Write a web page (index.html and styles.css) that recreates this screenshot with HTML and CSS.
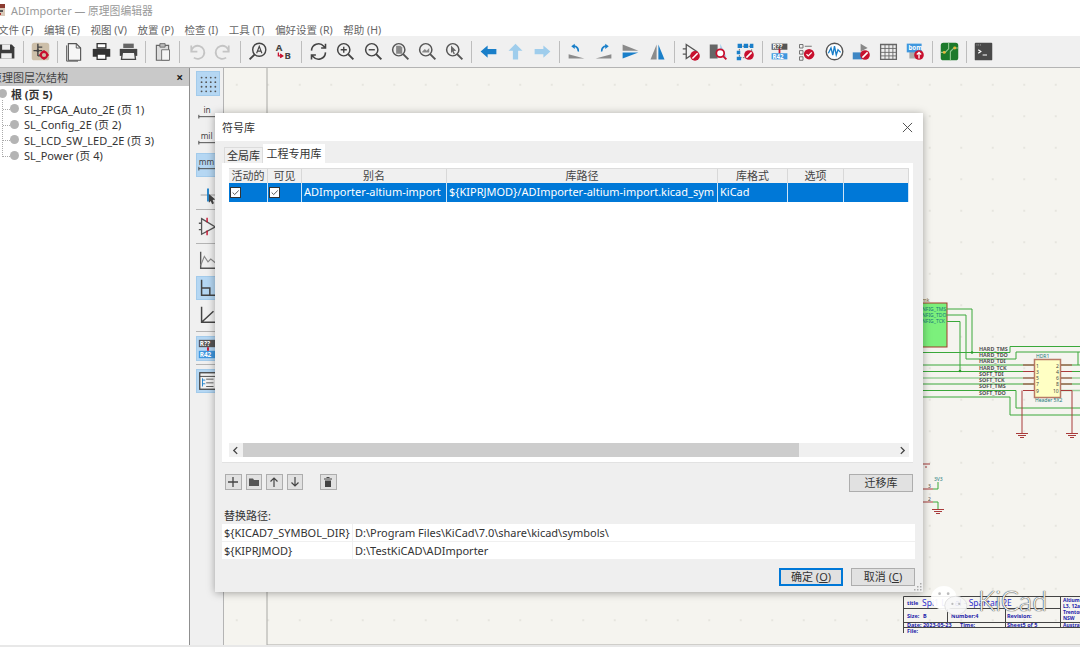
FILE: index.html
```html
<!DOCTYPE html>
<html lang="zh-CN">
<head>
  <meta charset="UTF-8">
  <title>ADImporter — 原理图编辑器</title>
  <link rel="stylesheet" href="styles.css">
</head>
<body>
  <header class="title-bar">
    <svg class="app-icon" viewBox="0 0 12 14"><rect y="1" width="9" height="12" fill="#d9c9b8"/><rect y="1" width="9" height="4" fill="#8c3b30"/><rect x="2" y="7" width="5" height="2" fill="#555"/><rect x="2" y="10" width="3" height="2" fill="#a33"/></svg>
    <span>ADImporter — 原理图编辑器</span>
  </header>

  <nav class="menu-bar">
    <a>文件 (F)</a><a>编辑 (E)</a><a>视图 (V)</a><a>放置 (P)</a><a>检查 (I)</a><a>工具 (T)</a><a>偏好设置 (R)</a><a>帮助 (H)</a>
  </nav>

  <div class="toolbar">
    <span class="tool"><svg viewBox="0 0 24 24"><path d="M3 4h15l3 3v13H3z" fill="#3c3c3c"/><rect x="7" y="4" width="9" height="6" fill="#eee"/><rect x="6" y="14" width="12" height="6" fill="#eee"/></svg></span>
    <i class="sep"></i>
    <span class="tool"><svg viewBox="0 0 24 24"><rect x="2" y="2" width="20" height="20" rx="3" fill="#cdbfa9"/><path d="M9 3v14M4 11h10M9 7h5M9 17h3" stroke="#444" stroke-width="1.6" fill="none"/><circle cx="9" cy="11" r="1.6" fill="#444"/><circle cx="16" cy="16" r="3.6" fill="none" stroke="#c8102e" stroke-width="2.4"/><path d="M16 10.500v2M16 19.500v2M10.500 16h2M19.500 16h2" stroke="#c8102e" stroke-width="1.8"/></svg></span>
    <i class="sep"></i>
    <span class="tool"><svg viewBox="0 0 24 24"><path d="M5 3h9l5 5v14H5z" fill="#f6f6f6" stroke="#555" stroke-width="1.300"/><path d="M14 3v5h5M3 5v18h13" fill="none" stroke="#555" stroke-width="1.100"/></svg></span>
    <span class="tool"><svg viewBox="0 0 24 24"><path d="M7 3h10v5H7z" fill="#fff" stroke="#333" stroke-width="1.500"/><path d="M2 9h20v9H2z" fill="#333"/><path d="M7 15h10v6H7z" fill="#fff" stroke="#333" stroke-width="1.500"/></svg></span>
    <span class="tool"><svg viewBox="0 0 24 24"><path d="M6 3h12v5H6z" fill="#666"/><path d="M2 9h20v8H2z" fill="#444"/><path d="M5 13h14l1 8H4z" fill="#f0f0f0" stroke="#444" stroke-width="1.500"/></svg></span>
    <i class="sep"></i>
    <span class="tool"><svg viewBox="0 0 24 24"><path d="M5 5h14v17H5z" fill="#ddd" stroke="#666" stroke-width="1.300"/><path d="M9 3h6v4H9z" fill="#bbb" stroke="#666"/><path d="M11 10h9v12h-9z" fill="#f4f4f4" stroke="#666"/></svg></span>
    <i class="sep"></i>
    <span class="tool dim"><svg viewBox="0 0 24 24"><path d="M6 12a7.500 7.500 0 1 1 3 7M6 5v7h7" fill="none" stroke="#c4c4c4" stroke-width="2"/></svg></span>
    <span class="tool dim"><svg viewBox="0 0 24 24"><path d="M18 12a7.500 7.500 0 1 0-3 7M18 5v7h-7" fill="none" stroke="#c4c4c4" stroke-width="2"/></svg></span>
    <i class="sep"></i>
    <span class="tool"><svg viewBox="0 0 24 24"><circle cx="14" cy="10" r="7.500" fill="none" stroke="#444" stroke-width="1.600"/><path d="M8.500 15.500L3 21" stroke="#444" stroke-width="2.200"/><path d="M11 14l3-8 3 8M12.200 11.500h3.600" fill="none" stroke="#444" stroke-width="1.300"/></svg></span>
    <span class="tool"><svg viewBox="0 0 24 24"><text x="2" y="11" class="ico-text">A</text><text x="12" y="21" class="ico-text">B</text><path d="M5 13v4h4M7 15l3 2-3 2" fill="none" stroke="#c8102e" stroke-width="1.500"/></svg></span>
    <i class="sep"></i>
    <span class="tool"><svg viewBox="0 0 24 24"><path d="M4 11a8 8 0 0 1 14-5l2 2M20 13a8 8 0 0 1-14 5l-2-2M20 3v5h-5M4 21v-5h5" fill="none" stroke="#444" stroke-width="1.800"/></svg></span>
    <span class="tool"><svg viewBox="0 0 24 24"><circle cx="10" cy="10" r="7" fill="none" stroke="#444" stroke-width="1.700"/><path d="M15 15l6 6" stroke="#444" stroke-width="2.200"/><path d="M6.500 10h7M10 6.500v7" stroke="#444" stroke-width="1.600"/></svg></span>
    <span class="tool"><svg viewBox="0 0 24 24"><circle cx="10" cy="10" r="7" fill="none" stroke="#444" stroke-width="1.700"/><path d="M15 15l6 6" stroke="#444" stroke-width="2.200"/><path d="M6.500 10h7" stroke="#444" stroke-width="1.600"/></svg></span>
    <span class="tool"><svg viewBox="0 0 24 24"><circle cx="10" cy="10" r="7" fill="none" stroke="#555" stroke-width="1.700"/><path d="M15 15l6 6" stroke="#555" stroke-width="2.200"/><path d="M7 5.500h5l2 2v7H7z" fill="#888"/></svg></span>
    <span class="tool"><svg viewBox="0 0 24 24"><circle cx="10" cy="10" r="7" fill="none" stroke="#555" stroke-width="1.700"/><path d="M15 15l6 6" stroke="#555" stroke-width="2.200"/><path d="M6 12l3-3 2 2 3-3v5H6z" fill="#888"/></svg></span>
    <span class="tool"><svg viewBox="0 0 24 24"><circle cx="10" cy="10" r="7" fill="none" stroke="#555" stroke-width="1.700"/><path d="M15 15l6 6" stroke="#555" stroke-width="2.200"/><path d="M8 5l6 6-3 .5 1.500 3-1.500.5-1.500-3-1.500 2z" fill="#666"/></svg></span>
    <i class="sep"></i>
    <span class="tool"><svg viewBox="0 0 24 24"><path d="M3 12l8-7v4h10v6H11v4z" fill="#1a7fc9"/></svg></span>
    <span class="tool"><svg viewBox="0 0 24 24"><path d="M12 3l8 8h-5v10H9V11H4z" fill="#9fcdec"/></svg></span>
    <span class="tool"><svg viewBox="0 0 24 24"><path d="M21 12l-8-7v4H3v6h10v4z" fill="#9fcdec"/></svg></span>
    <i class="sep"></i>
    <span class="tool"><svg viewBox="0 0 24 24"><path d="M3 20v-5l18 5z" fill="#8b8b8b"/><path d="M14 12a5 5 0 0 0-5-6" fill="none" stroke="#1a7fc9" stroke-width="2"/><path d="M6 6l4-3v6z" fill="#1a7fc9"/></svg></span>
    <span class="tool"><svg viewBox="0 0 24 24"><path d="M21 20v-5L3 20z" fill="#8b8b8b"/><path d="M10 12a5 5 0 0 1 5-6" fill="none" stroke="#1a7fc9" stroke-width="2"/><path d="M18 6l-4-3v6z" fill="#1a7fc9"/></svg></span>
    <span class="tool"><svg viewBox="0 0 24 24"><path d="M3 4l18 7H3z" fill="#8b8b8b"/><path d="M3 20l18-7H3z" fill="#1a7fc9"/></svg></span>
    <span class="tool"><svg viewBox="0 0 24 24"><path d="M11 4L4 21h7z" fill="#8b8b8b"/><path d="M13 4l7 17h-7z" fill="#1a7fc9"/></svg></span>
    <i class="sep"></i>
    <span class="tool"><svg viewBox="0 0 24 24"><path d="M6 4l12 8-12 8zM2 9h4M2 15h4" fill="none" stroke="#555" stroke-width="1.500"/><circle cx="16" cy="17" r="5.500" fill="#c8102e"/><path d="M13 20l6-6" stroke="#fff" stroke-width="1.800"/></svg></span>
    <span class="tool"><svg viewBox="0 0 24 24"><path d="M2 4h9v16H2z" fill="#666"/><path d="M14 3l7 15h-7z" fill="#9fcdec"/><circle cx="14" cy="14" r="4.500" fill="#fff" stroke="#c8102e" stroke-width="2"/><path d="M17 17l4 4" stroke="#c8102e" stroke-width="2.200"/></svg></span>
    <span class="tool"><svg viewBox="0 0 24 24"><path d="M5 6h14v13H5z" fill="none" stroke="#666" stroke-dasharray="2 1.500"/><path d="M3 3h5v5H3zM10 3h5v5h-5zM17 3h4v5h-4zM2 11h4v4H2zM2 18h5v4H2z" fill="#1a7fc9"/><circle cx="16" cy="16" r="5.500" fill="#c8102e"/><path d="M13 19l6-6" stroke="#fff" stroke-width="1.800"/></svg></span>
    <i class="sep"></i>
    <span class="tool"><svg viewBox="0 0 24 24"><rect x="3" y="3" width="18" height="7" fill="#555"/><rect x="3" y="14" width="18" height="7" fill="#3f97de"/><text x="4" y="9.300" class="ico-mini">R??</text><text x="4" y="20.300" class="ico-mini">R42</text><path d="M12 9v5" stroke="#c8102e" stroke-width="2"/></svg></span>
    <span class="tool"><svg viewBox="0 0 24 24"><path d="M4 4h4v4H4zM4 11h4v4H4zM4 18h4v4H4z" fill="none" stroke="#666"/><path d="M10 6h8" stroke="#666"/><circle cx="15" cy="15" r="6" fill="#c8102e"/><path d="M12 15l2 2 4-4" fill="none" stroke="#fff" stroke-width="1.600"/></svg></span>
    <span class="tool"><svg viewBox="0 0 24 24"><circle cx="12" cy="12" r="9.500" fill="#fff" stroke="#555" stroke-width="1.600"/><path d="M5 14l3-6 2 8 2-10 2 10 2-6 3 3" fill="none" stroke="#1a7fc9" stroke-width="1.500"/></svg></span>
    <span class="tool"><svg viewBox="0 0 24 24"><path d="M11 3l8 5-8 4z" fill="#888"/><rect x="2" y="13" width="11" height="8" fill="#3f87c4"/><circle cx="16" cy="16" r="5.500" fill="#c8102e"/><path d="M13 19l6-6" stroke="#fff" stroke-width="1.800"/></svg></span>
    <span class="tool"><svg viewBox="0 0 24 24"><path d="M3 4h18v17H3z" fill="#eee" stroke="#666" stroke-width="1.500"/><path d="M3 8.500h18M3 13h18M3 17h18M8 4v17M12.500 4v17M17 4v17" stroke="#666"/></svg></span>
    <span class="tool"><svg viewBox="0 0 24 24"><rect x="5" y="10" width="14" height="10" fill="#aaa"/><rect x="2" y="3" width="17" height="10" fill="#3f97de"/><text x="4" y="10.500" class="ico-mini">bom</text><circle cx="16" cy="16" r="5.500" fill="#c8102e"/><path d="M16 20v-7M13.500 15.500l2.500-2.500 2.500 2.500" fill="none" stroke="#fff" stroke-width="1.500"/></svg></span>
    <i class="sep"></i>
    <span class="tool"><svg viewBox="0 0 24 24"><rect x="2" y="2" width="20" height="20" rx="3" fill="#1d7a2b"/><path d="M2 13h5l4-4V2M22 8h-5l-4 4v10" fill="none" stroke="#8fc78f" stroke-width="1.300"/><circle cx="6" cy="13" r="1.700" fill="#e8b93c"/><circle cx="18" cy="8" r="1.700" fill="#e8b93c"/></svg></span>
    <i class="sep"></i>
    <span class="tool"><svg viewBox="0 0 24 24"><rect x="2" y="2" width="20" height="20" rx="1" fill="#4a4a4a"/><path d="M6 10l3 2-3 2M11 16h5" fill="none" stroke="#fff" stroke-width="1.300"/><path d="M4 4.500h6" stroke="#bbb" stroke-dasharray="1 1"/></svg></span>
  </div>

  <div class="workspace">
    <aside class="hierarchy">
      <div class="panel-head"><span>原理图层次结构</span><b>×</b></div>
      <ul class="tree">
        <li class="root"><i class="dot"></i>根 (页 5)</li>
        <li><i class="dot"></i>SL_FPGA_Auto_2E (页 1)</li>
        <li><i class="dot"></i>SL_Config_2E (页 2)</li>
        <li><i class="dot"></i>SL_LCD_SW_LED_2E (页 3)</li>
        <li><i class="dot"></i>SL_Power (页 4)</li>
      </ul>
    </aside>

    <div class="side-tools">
      <span class="vtool on m5"><svg viewBox="0 0 24 24" fill="#555"><circle cx="5" cy="5" r="1"/><circle cx="10" cy="5" r="1"/><circle cx="15" cy="5" r="1"/><circle cx="20" cy="5" r="1"/><circle cx="5" cy="10" r="1"/><circle cx="10" cy="10" r="1"/><circle cx="15" cy="10" r="1"/><circle cx="20" cy="10" r="1"/><circle cx="5" cy="15" r="1"/><circle cx="10" cy="15" r="1"/><circle cx="15" cy="15" r="1"/><circle cx="20" cy="15" r="1"/><circle cx="5" cy="20" r="1"/><circle cx="10" cy="20" r="1"/><circle cx="15" cy="20" r="1"/><circle cx="20" cy="20" r="1"/></svg></span>
      <span class="vtool m2"><svg viewBox="0 0 24 24"><text x="7" y="12" class="unit">in</text><path d="M2 16h20M2 14v4M22 14v4" stroke="#444" fill="none"/></svg></span>
      <span class="vtool m2"><svg viewBox="0 0 24 24"><text x="4" y="12" class="unit">mil</text><path d="M2 16h20M2 14v4M22 14v4" stroke="#444" fill="none"/></svg></span>
      <span class="vtool on m6"><svg viewBox="0 0 24 24"><text x="2" y="12" class="unit">mm</text><path d="M2 16h20M2 14v4M22 14v4" stroke="#444" fill="none"/></svg></span>
      <span class="vtool m2"><svg viewBox="0 0 24 24"><path d="M4 12h16" stroke="#999"/><path d="M12 5v14" stroke="#1a7fc9" stroke-width="2"/><path d="M13 11l7 6-3 .5 1.500 3.500-2 1-1.500-3.500-2 2z" fill="#444"/></svg></span>
      <i class="vsep"></i>
      <span class="vtool m5"><svg viewBox="0 0 24 24"><path d="M5 4l15 9-15 8zM2 9h3M2 16h3" fill="none" stroke="#555" stroke-width="1.400"/><path d="M11 3v5M11 17v5" stroke="#c8102e" stroke-width="1.500"/></svg></span>
      <i class="vsep"></i>
      <span class="vtool m4"><svg viewBox="0 0 24 24"><path d="M4 3v18h18" fill="none" stroke="#555" stroke-width="1.500"/><path d="M4 18l4-10 4 6 3-3 5 4" fill="none" stroke="#888" stroke-width="1.200"/></svg></span>
      <span class="vtool on m3"><svg viewBox="0 0 24 24"><path d="M5 3v17h17M5 12h9v8" fill="none" stroke="#444" stroke-width="1.600"/></svg></span>
      <span class="vtool m4"><svg viewBox="0 0 24 24"><path d="M5 3v17h17M5 20L18 8" fill="none" stroke="#444" stroke-width="1.600"/></svg></span>
      <i class="vsep"></i>
      <span class="vtool on m3 tall"><svg viewBox="0 0 24 24"><rect x="2" y="2" width="20" height="8" fill="#555"/><rect x="2" y="14" width="20" height="8" fill="#3f97de"/><text x="3" y="9" class="ico-mini">R??</text><text x="3" y="21" class="ico-mini">R42</text><path d="M12 10v4" stroke="#c8102e" stroke-width="2"/></svg></span>
      <i class="vsep"></i>
      <span class="vtool on m3"><svg viewBox="0 0 24 24"><rect x="3" y="3" width="18" height="18" fill="#f2f2f2" stroke="#444" stroke-width="1.400"/><path d="M3 7h18" stroke="#444"/><path d="M6 9v9M6 11h3M6 15h3" stroke="#1a7fc9" fill="none"/><path d="M10 10h8M10 14h8M10 18h8" stroke="#555"/></svg></span>
    </div>

    <main class="canvas">
      <svg class="sheet" viewBox="224 68 856 577">
        <path d="M267 68V645H1080" class="frame"/>
        <rect x="922" y="303" width="25" height="44" class="sub"/>
        <text x="922" y="302" class="sub-name">mk</text>
        <text x="922" y="310.500" class="net-teal">NFIG_TMS</text>
        <text x="922" y="316.500" class="net-teal">NFIG_TDO</text>
        <text x="922" y="323" class="net-teal">NFIG_TCK</text>
        <path d="M947 309H972V352.500M947 315H966V359H1016V352H1080M947 321.500H960V371" class="wire"/>
        <path d="M923 352.500H1010V346.500H1080M923 365H1035M923 371.500H1035M923 384H1035M923 390.500H1016V408H1080M923 397H1010V415H1080M1060 365H1080M1060 371.500H1080M1060 384H1080M1078 352V365" class="wire"/>
        <path d="M923 378H1035M1060 378H1080M1060 390.500H1080" class="wire faint"/>
        <circle cx="972" cy="352.500" r="1.300" fill="#2c9c2c"/>
        <circle cx="960" cy="371" r="1.300" fill="#2c9c2c"/>
        <text x="979" y="351" class="net">HARD_TMS</text>
        <text x="979" y="357" class="net">HARD_TDO</text>
        <text x="979" y="363" class="net">HARD_TDI</text>
        <text x="979" y="369.500" class="net">HARD_TCK</text>
        <text x="979" y="376" class="net">SOFT_TDI</text>
        <text x="979" y="382" class="net">SOFT_TCK</text>
        <text x="979" y="388" class="net">SOFT_TMS</text>
        <text x="979" y="394.500" class="net">SOFT_TDO</text>
        <rect x="1034.500" y="359.500" width="26" height="38" class="header-box"/>
        <path d="M1023 365H1034M1023 371.500H1034M1023 378H1034M1023 384H1034M1023 390.500H1034M1061 365H1072M1061 371.500H1072M1061 378H1072M1061 384H1072M1061 390.500H1072M1022 390.500V428M1072 390.500V428" class="pin"/>
        <text x="1036" y="367.500" class="pin-no">1</text><text x="1036" y="373.500" class="pin-no">3</text><text x="1036" y="380" class="pin-no">5</text><text x="1036" y="386" class="pin-no">7</text><text x="1036" y="392.500" class="pin-no">9</text>
        <text x="1056" y="367.500" class="pin-no">2</text><text x="1056" y="373.500" class="pin-no">4</text><text x="1056" y="380" class="pin-no">6</text><text x="1056" y="386" class="pin-no">8</text><text x="1053" y="392.500" class="pin-no">10</text>
        <text x="1036" y="358" class="net-teal">HDR1</text>
        <text x="1035" y="401.500" class="net-teal">Header 5X2</text>
        <path d="M1016 433.500H1028M1018 435.500H1026M1020 437.500H1024M1066 433.500H1078M1068 435.500H1076M1070 437.500H1074M1022 428V433M1072 428V433" class="pin"/>
        <path d="M922.500 458V468M922.500 464H930M925 467H927M922.500 483V508M923 489H933M923 502H933" class="pin"/>
        <path d="M933 489H938V482M933 502H938V509" class="wire"/>
        <text x="934" y="481" class="net-teal">3V3</text>
        <text x="928" y="488" class="pin-no">3</text><text x="928" y="501" class="pin-no">2</text>
        <path d="M932 509.500H944M934 511.500H942M936 513.500H940" class="pin"/>

        <path d="M903.500 633V596.500H1080M903.500 608.500H1060M903.500 622.500H1080M903.500 627.500H1080M947.500 608.500V622.500M1005.500 608.500V627.500M1060.500 596.500V627.500" class="frame dark"/>
        <text x="907" y="605" class="tb-label">title</text>
        <text x="922" y="606" class="tb-title">Spi1 Level - Spartan 2E</text>
        <text x="907" y="618" class="tb-label">Size:</text><text x="923" y="618" class="tb-label">B</text>
        <text x="951" y="618" class="tb-label">Number:4</text>
        <text x="1007" y="618" class="tb-label">Revision:</text>
        <text x="907" y="626.500" class="tb-label">Date: 2023-05-23</text><text x="960" y="626.500" class="tb-label">Time:</text>
        <text x="1007" y="626.500" class="tb-label">Sheet5 of 5</text>
        <text x="907" y="632.500" class="tb-label">File:</text>
        <text x="1063" y="602" class="tb-small">Altium</text><text x="1063" y="608" class="tb-small">L3, 12a</text><text x="1063" y="614" class="tb-small">Trenton</text><text x="1063" y="620" class="tb-small">NSW</text><text x="1063" y="626.500" class="tb-small">Australia</text>
      </svg>
    </main>
  </div>

  <div class="watermark">
    <svg viewBox="0 0 44 34"><ellipse cx="16" cy="14" rx="15" ry="14" fill="#fff" fill-opacity=".92"/><ellipse cx="30" cy="23" rx="13" ry="11" fill="#f7f7f7" fill-opacity=".9" stroke="#ddd"/><circle cx="11" cy="9" r="1.600" fill="#bbb"/><circle cx="21" cy="9" r="1.600" fill="#bbb"/><circle cx="26" cy="21" r="1.300" fill="#bbb"/><circle cx="34" cy="21" r="1.300" fill="#bbb"/></svg>
    <span>KiCad</span>
  </div>

  <section class="dialog">
    <div class="dialog-title">
      <span>符号库</span>
      <svg class="close" viewBox="0 0 12 12"><path d="M1 1l10 10M11 1L1 11" stroke="#444" stroke-width="1"/></svg>
    </div>
    <div class="dialog-body">
      <div class="tabs">
        <span class="tab">全局库</span>
        <span class="tab active">工程专用库</span>
      </div>
      <div class="tab-panel">
        <div class="grid grid-head">
          <span>活动的</span><span>可见</span><span>别名</span><span>库路径</span><span>库格式</span><span>选项</span><span></span>
        </div>
        <div class="grid grid-row">
          <span class="check-cell"><i class="check"><svg viewBox="0 0 11 11"><path d="M2 5.500l2.500 2.500 5-5" fill="none" stroke="#444" stroke-width="1.100"/></svg></i></span>
          <span class="check-cell"><i class="check"><svg viewBox="0 0 11 11"><path d="M2 5.500l2.500 2.500 5-5" fill="none" stroke="#444" stroke-width="1.100"/></svg></i></span>
          <span>ADImporter-altium-import</span>
          <span>${KIPRJMOD}/ADImporter-altium-import.kicad_sym</span>
          <span>KiCad</span><span></span><span></span>
        </div>
        <div class="hscroll">
          <svg class="arrow" viewBox="0 0 8 8"><path d="M5.500 1L2.500 4l3 3" fill="none" stroke="#444" stroke-width="1.200"/></svg>
          <div class="thumb"></div>
          <svg class="arrow" viewBox="0 0 8 8"><path d="M2.500 1l3 3-3 3" fill="none" stroke="#444" stroke-width="1.200"/></svg>
        </div>
      </div>

      <div class="actions">
        <button class="icon-btn"><svg viewBox="0 0 12 12"><path d="M6 1v10M1 6h10" stroke="#444" stroke-width="1.300"/></svg></button>
        <button class="icon-btn"><svg viewBox="0 0 12 12"><path d="M1 2.500h4l1 1.500h5v6H1z" fill="#555"/></svg></button>
        <button class="icon-btn"><svg viewBox="0 0 12 12"><path d="M6 11V2M2.500 5.500L6 2l3.500 3.500" fill="none" stroke="#444" stroke-width="1.200"/></svg></button>
        <button class="icon-btn"><svg viewBox="0 0 12 12"><path d="M6 1v9M2.500 6.500L6 10l3.500-3.500" fill="none" stroke="#444" stroke-width="1.200"/></svg></button>
        <button class="icon-btn trash"><svg viewBox="0 0 12 12"><path d="M2 2.500h8v1H2zM4.500 1h3v1h-3zM3 4.500h6v6.500H3z" fill="#444"/></svg></button>
        <button class="text-btn migrate">迁移库</button>
      </div>

      <p class="paths-label">替换路径:</p>
      <div class="paths">
        <div class="path-row"><span>${KICAD7_SYMBOL_DIR}</span><span>D:\Program Files\KiCad\7.0\share\kicad\symbols\</span></div>
        <div class="path-row"><span>${KIPRJMOD}</span><span>D:\TestKiCAD\ADImporter</span></div>
      </div>

      <div class="dialog-foot">
        <button class="text-btn primary">确定 (<u>O</u>)</button>
        <button class="text-btn">取消 (<u>C</u>)</button>
      </div>
      <svg class="grip" viewBox="0 0 8 8" fill="#aaa"><rect x="6" y="0" width="1.500" height="1.500"/><rect x="3" y="3" width="1.500" height="1.500"/><rect x="6" y="3" width="1.500" height="1.500"/><rect x="0" y="6" width="1.500" height="1.500"/><rect x="3" y="6" width="1.500" height="1.500"/><rect x="6" y="6" width="1.500" height="1.500"/></svg>
    </div>
  </section>
</body>
</html>
```

FILE: styles.css
```css
* {
  margin: 0;
  padding: 0;
  box-sizing: border-box;
  font-family: 'Noto Sans', 'Noto Sans CJK SC', sans-serif;
}

html, body {
  height: 100%;
  overflow: hidden;
}

body {
  display: flex;
  flex-direction: column;
  width: 1080px;
  height: 647px;
  background-color: #fff;
  color: #333;
  font-size: 11px;
  position: relative;
}

.title-bar {
  height: 20px;
  display: flex;
  align-items: center;
  color: #999;
  font-size: 10.8px;
}

.app-icon {
  width: 12px;
  height: 14px;
  margin-left: -4px;
  margin-right: 3px;
}

.menu-bar {
  height: 16px;
  padding-top: 2px;
  display: flex;
  align-items: center;
  gap: 10.6px;
  margin-left: -2px;
  color: #666;
  font-size: 10.5px;
}

.toolbar {
  height: 32px;
  display: flex;
  align-items: center;
  margin-left: -7px;
  background-color: #f0f0f0;
  border-bottom: 1px solid #b4b4b4;
}

.tool {
  width: 27.1px;
  height: 24px;
  display: flex;
  align-items: center;
  justify-content: center;
  flex: none;
}

.tool svg {
  width: 21px;
  height: 21px;
}

.sep {
  width: 6.9px;
  flex: none;
  align-self: center;
  height: 22px;
  background: linear-gradient(#bdbdbd, #bdbdbd) center / 1px 100% no-repeat;
}

.ico-text {
  font-size: 11px;
  font-weight: 700;
  fill: #444;
}

.ico-mini {
  font-size: 7px;
  font-weight: 700;
  fill: #fff;
}

.unit {
  font-size: 9px;
  fill: #444;
}

.workspace {
  flex: 1;
  display: flex;
  min-height: 0;
  border-bottom: 2px solid #e8e8e8;
}

.hierarchy {
  width: 190px;
  flex: none;
  border-right: 1px solid #8f8f8f;
  background-color: #fff;
}

.panel-head {
  height: 18px;
  display: flex;
  justify-content: space-between;
  align-items: center;
  padding: 0 6px 0 0;
  margin-left: -9px;
  background-color: #c9c9c9;
  color: #444;
}

.panel-head b {
  font-size: 12px;
  color: #222;
}

.tree {
  list-style: none;
  position: relative;
}

.tree::before {
  content: '';
  position: absolute;
  left: 2px;
  top: 14px;
  height: 57px;
  border-left: 1px dotted #aaa;
}

.tree li {
  height: 15.4px;
  display: flex;
  align-items: center;
  padding-left: 24px;
  position: relative;
  white-space: nowrap;
}

.tree li::before {
  content: '';
  position: absolute;
  left: 3px;
  top: 8px;
  width: 7px;
  border-top: 1px dotted #aaa;
}

.tree .root {
  padding-left: 11px;
  font-weight: 700;
}

.tree .root::before {
  display: none;
}

.dot {
  position: absolute;
  left: 10px;
  top: 3px;
  width: 9px;
  height: 9px;
  border-radius: 50%;
  background-color: #b4b4b4;
}

.root .dot {
  left: -2px;
}

.side-tools {
  width: 34px;
  flex: none;
  display: flex;
  flex-direction: column;
  align-items: flex-start;
  padding: 3px 4px 0 6px;
  background-color: #f0f0f0;
  border-right: 1px solid #b4b4b4;
}

.vtool {
  width: 24px;
  height: 24px;
  display: flex;
  align-items: center;
  justify-content: center;
  flex: none;
}

.vtool svg {
  width: 22px;
  height: 22px;
}

.vtool.on {
  background-color: #b5d7f3;
  border: 1px solid #a3cbeb;
}

.vtool.tall {
  height: 25px;
}

.m2 { margin-bottom: 2px; }
.m3 { margin-bottom: 3px; }
.m4 { margin-bottom: 4px; }
.m5 { margin-bottom: 5px; }
.m6 { margin-bottom: 6px; }

.side-tools .vtool:first-child {
  height: 25px;
}

.vsep {
  width: 24px;
  height: 1px;
  flex: none;
  margin-bottom: 4px;
  background-color: #b4b4b4;
}

.canvas {
  flex: 1;
  position: relative;
  min-width: 0;
  background-color: #f5f4ef;
  background-image: radial-gradient(circle, #e6e5df 0.7px, transparent 1px);
  background-size: 31.5px 31.5px;
  background-position: -3px 1px;
}

.sheet {
  position: absolute;
  left: 0;
  top: 0;
  width: 856px;
  height: 577px;
}

.frame {
  fill: none;
  stroke: #a8a8a4;
  stroke-width: 1;
}

.frame.dark {
  stroke: #444;
}

.sub {
  fill: #7cf07c;
  stroke: #a33a2a;
}

.sub-name {
  font-size: 5px;
  fill: #7a5a20;
}

.wire {
  fill: none;
  stroke: #3aa83a;
  stroke-width: 1;
}

.wire.faint {
  stroke: #9ccf9c;
  stroke-width: 1.500;
}

.pin {
  fill: none;
  stroke: #a83a3a;
  stroke-width: 1;
}

.header-box {
  fill: #ffffc4;
  stroke: #b87a66;
  stroke-width: 1.500;
}

.net {
  font-size: 5.4px;
  font-weight: 700;
  fill: #555;
}

.net-teal {
  font-size: 5px;
  fill: #1a7a7a;
}

.pin-no {
  font-size: 5px;
  fill: #444;
}

.tb-label {
  font-size: 5.5px;
  font-weight: 700;
  fill: #2222aa;
}

.tb-small {
  font-size: 5px;
  font-weight: 700;
  fill: #2222aa;
}

.tb-title {
  font-size: 8.5px;
  fill: #3030cc;
}

.watermark {
  position: absolute;
  left: 930px;
  top: 586px;
  display: flex;
  align-items: center;
}

.watermark svg {
  width: 38px;
  height: 29px;
}

.watermark span {
  font-family: 'Lato', sans-serif;
  font-size: 27px;
  font-weight: 300;
  margin-left: 10px;
  line-height: 29px;
  color: rgba(255, 255, 255, 0.95);
  text-shadow: 0 0 1px #333, 0 0 1px #333;
}

.dialog {
  position: absolute;
  left: 215px;
  top: 113px;
  width: 708px;
  height: 479px;
  display: flex;
  flex-direction: column;
  box-shadow: 0 1px 8px rgba(0, 0, 0, 0.35);
  background-color: #efefef;
}

.dialog-title {
  height: 28px;
  flex: none;
  display: flex;
  justify-content: space-between;
  align-items: center;
  padding: 0 10px 0 7px;
  background-color: #fff;
}

.close {
  width: 11px;
  height: 11px;
}

.dialog-body {
  flex: 1;
  position: relative;
  display: flex;
  flex-direction: column;
  padding: 3px 8px 0 7px;
}

.tabs {
  display: flex;
  height: 19px;
  padding-left: 2px;
}

.tab {
  width: 39px;
  height: 16px;
  margin-top: 3px;
  background-color: #f0f0f0;
  border: 1px solid #dcdcdc;
  border-bottom: 0;
  text-align: center;
  line-height: 15px;
}

.tab.active {
  width: 62px;
  height: 19px;
  margin-top: 0;
  background-color: #fff;
  border: 0;
  line-height: 19px;
}

.tab-panel {
  width: 691px;
  height: 300px;
  flex: none;
  display: flex;
  flex-direction: column;
  padding: 5px 4px 5px 7px;
  background-color: #fff;
  border-bottom: 1px solid #e2e2e2;
}

.grid {
  display: grid;
  grid-template-columns: 39px 34px 145px 271px 70px 56px 65px;
}

.grid-head {
  height: 15px;
  background-color: #f0f0f0;
  border-top: 1px solid #dcdcdc;
  line-height: 14px;
  text-align: center;
  color: #444;
}

.grid-head span {
  border-right: 1px solid #d8d8d8;
}

.grid-row {
  height: 19px;
  background-color: #0078d7;
  color: #fff;
  line-height: 18px;
  white-space: nowrap;
}

.grid-row span {
  padding-left: 2px;
  border-right: 1px solid #cfe4f6;
  overflow: hidden;
}

.grid-row .check-cell {
  padding-left: 1px;
}

.check {
  display: block;
  width: 11px;
  height: 11px;
  margin-top: 4px;
  background-color: #fff;
  border: 1px solid #333;
}

.check svg {
  display: block;
  width: 9px;
  height: 9px;
}

.hscroll {
  margin-top: auto;
  height: 14px;
  display: flex;
  align-items: center;
  justify-content: space-between;
  background-color: #f0f0f0;
  position: relative;
}

.arrow {
  width: 9px;
  height: 9px;
  margin: 0 2px;
}

.thumb {
  position: absolute;
  left: 14px;
  width: 556px;
  top: 0;
  bottom: 0;
  background-color: #cdcdcd;
}

.actions {
  display: flex;
  gap: 4px;
  margin: 11px 2px 0 3px;
  height: 18px;
}

.icon-btn {
  width: 16.500px;
  height: 16px;
  display: flex;
  align-items: center;
  justify-content: center;
  background-color: #e1e1e1;
  border: 1px solid #adadad;
}

.icon-btn svg {
  width: 12px;
  height: 12px;
}

.trash {
  margin-left: 13px;
}

.text-btn {
  width: 64px;
  height: 18px;
  background-color: #e1e1e1;
  border: 1px solid #adadad;
  font-size: 11px;
  color: #333;
  line-height: 14px;
}

.migrate {
  margin-left: auto;
}

.paths-label {
  margin-top: 15px;
  height: 17px;
  padding-left: 2px;
  line-height: 17px;
}

.paths {
  width: 693px;
  height: 36px;
  flex: none;
  background-color: #fff;
}

.path-row {
  display: grid;
  grid-template-columns: 131px 1fr;
  height: 18px;
  line-height: 17px;
  border-bottom: 1px solid #f0f0f0;
}

.path-row span:first-child {
  padding-left: 2px;
  border-right: 1px solid #f0f0f0;
}

.path-row span:last-child {
  padding-left: 2px;
}

.dialog-foot {
  display: flex;
  justify-content: flex-end;
  gap: 8px;
  margin-top: 8px;
}

.text-btn.primary {
  border: 2px solid #0078d7;
  line-height: 12px;
}

.grip {
  position: absolute;
  right: 1px;
  bottom: 1px;
  width: 8px;
  height: 8px;
}
```
